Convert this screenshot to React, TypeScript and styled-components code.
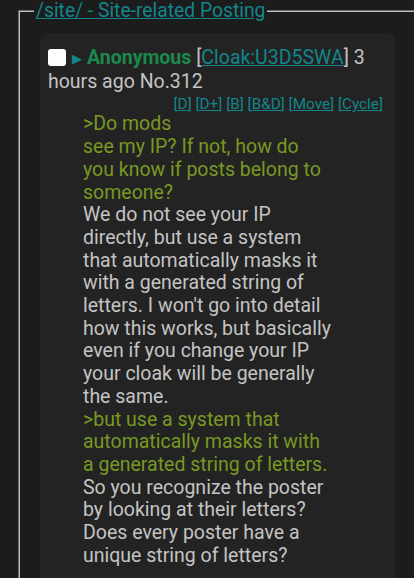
import React from "react";
import styled, { createGlobalStyle } from "styled-components";

const Global = createGlobalStyle`
  html, body { margin: 0; padding: 0; background: #1c1c1c; }
  body { font-family: Roboto, "Noto Sans", sans-serif; color: #c4c4c4; overflow: hidden; }
`;

const Page = styled.div`
  width: 414px;
  height: 578px;
  overflow: hidden;
`;

const Fieldset = styled.fieldset`
  margin: 0 0 0 18px;
  padding: 11px 0 0 20px;
  border: 2px groove #c0c0c0;
  border-right: none;
  border-bottom: none;
  min-width: 0;
`;

const Legend = styled.legend`
  padding: 0 2px;
  margin-left: -6px;
  font-size: 19.3px;
  line-height: 22px;
`;

const Link = styled.a`
  color: #12868b;
  text-decoration: underline;
  cursor: pointer;
`;

const Post = styled.div`
  width: 355px;
  box-sizing: border-box;
  background: #232323;
  border-radius: 8px;
  padding: 14px 12px 40px 8px;
  font-size: 19.5px;
  line-height: 22.7px;
`;

const Header = styled.div`
  color: #c4c4c4;
`;

const Check = styled.span`
  display: inline-block;
  width: 18px;
  height: 17px;
  background: #fff;
  border-radius: 3px;
  vertical-align: -2px;
  margin-right: 6px;
`;

const Arrow = styled.span`
  color: #12868b;
  font-size: 13px;
  margin-right: 5px;
  vertical-align: 1px;
`;

const Name = styled.span`
  color: #1b8a4c;
  font-weight: 700;
`;

const Actions = styled.div`
  text-align: right;
  font-size: 15.3px;
  line-height: 18px;
  margin: 2px 0 0;
  color: #12868b;
`;

const Message = styled.div`
  margin-left: 35px;
  width: 250px;
  margin-top: 0;
`;

const Green = styled.span`
  color: #789922;
`;

const actions = ["D", "D+", "B", "B&D", "Move", "Cycle"];

export default function App() {
  return (
    <Page>
      <Global />
      <Fieldset>
        <Legend>
          <Link>/site/ - Site-related Posting</Link>
        </Legend>
        <Post>
          <Header>
            <Check />
            <Arrow>▶</Arrow>
            <Name>Anonymous</Name> [<Link>Cloak:U3D5SWA</Link>] 3 hours ago No.312
          </Header>
          <Actions>
            {actions.map((a, i) => (
              <React.Fragment key={a}>
                {i > 0 ? " " : ""}[<Link>{a}</Link>]
              </React.Fragment>
            ))}
          </Actions>
          <Message>
            <Green>
              &gt;Do mods
              <br />
              see my IP? If not, how do you know if posts belong to someone?
            </Green>
            <br />
            We do not see your IP directly, but use a system that automatically masks it with a
            generated string of letters. I won't go into detail how this works, but basically even
            if you change your IP your cloak will be generally the same.
            <br />
            <Green>
              &gt;but use a system that automatically masks it with a generated string of letters.
            </Green>
            <br />
            So you recognize the poster by looking at their letters? Does every poster have a
            unique string of letters?
          </Message>
        </Post>
      </Fieldset>
    </Page>
  );
}
